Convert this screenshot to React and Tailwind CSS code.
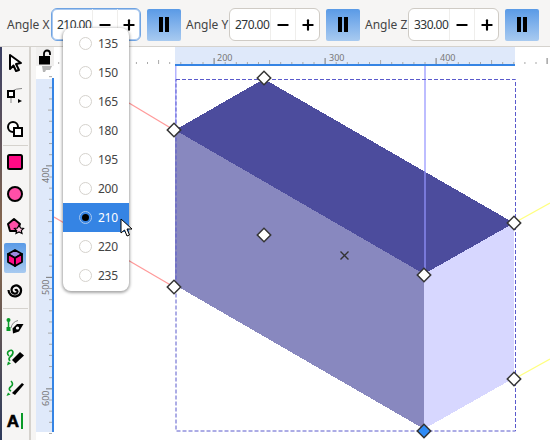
import { Minus, Plus } from "lucide-react";

const OPTIONS = [135, 150, 165, 180, 195, 200, 210, 220, 235];

function AngleField({ label, value, focused }) {
  return (
    <>
      <span className={`text-[12px] text-[#444] whitespace-nowrap ${focused ? "w-[44px]" : "w-[43px]"}`}>{label}</span>
      <div
        className={`flex h-[33px] items-stretch rounded-[6px] bg-white overflow-hidden border ${
          focused ? "w-[90px] border-[#6fa3e2] shadow-[inset_0_0_0_1px_#a9c8ef]" : "w-[91px] border-[#cfcbc5]"
        }`}
      >
        <span className="w-[40px] pl-[5px] text-[12px] leading-[31px] text-[#2e3436] tracking-[-0.55px] whitespace-nowrap">{value}</span>
        <span className="flex w-[25px] items-center justify-center border-l border-[#efeeec]">
          <Minus size={16} strokeWidth={3.2} className="text-black" />
        </span>
        <span className="flex flex-1 items-center justify-center border-l border-[#efeeec]">
          <Plus size={16} strokeWidth={3.2} className="text-black" />
        </span>
      </div>
      <div className="flex h-[32px] w-[34px] ml-[6px] mr-[5px] items-center justify-center gap-[2px] rounded-[2px] bg-gradient-to-b from-[#5a9ae6] to-[#a8caf0]">
        <span className="h-[15px] w-[4px] bg-black" />
        <span className="h-[15px] w-[4px] bg-black" />
      </div>
    </>
  );
}

function Tool({ active, children }) {
  return (
    <div className={`mx-[2px] flex h-[30px] w-[22px] items-center justify-center rounded-[2px] ${active ? "bg-gradient-to-b from-[#5a9ae6] to-[#a8caf0]" : ""}`}>
      <svg width="20" height="20" viewBox="0 0 20 20">{children}</svg>
    </div>
  );
}

function LeftToolbar() {
  return (
    <div className="flex w-[36px] shrink-0 bg-[#f6f5f4]">
      <div className="w-[2px] bg-gradient-to-b from-[#3b3f63] via-[#8d6a4a] to-[#2d3a5c]" />
      <div className="flex w-[27px] flex-col pt-[1px]">
        <Tool>
          <path d="M5 2 L16 10 L11 11 L14 17 L11 18 L8.5 12.5 L5 16 Z" fill="#fff" stroke="#000" strokeWidth="2" strokeLinejoin="round" />
        </Tool>
        <div className="h-[3px]" />
        <Tool>
          <path d="M7 5 Q11 2.5 17 2.5" fill="none" stroke="#888" />
          <rect x="3" y="5" width="6" height="6" fill="#fff" stroke="#000" strokeWidth="2" />
          <path d="M13 13 L17 15 L13 17 Z" fill="#000" />
          <path d="M6 12 V17" stroke="#888" />
        </Tool>
        <div className="h-[3px]" />
        <Tool>
          <circle cx="8" cy="8" r="5" fill="#fff" stroke="#000" strokeWidth="2" />
          <rect x="9" y="9" width="8" height="8" fill="#fff" stroke="#000" strokeWidth="2" />
        </Tool>
        <div className="mx-[1px] mb-[1px] mt-[1px] h-px bg-[#d5d2cd]" />
        <Tool>
          <rect x="3" y="3" width="14" height="14" rx="1.5" fill="#ff0a85" stroke="#000" strokeWidth="2" />
        </Tool>
        <div className="h-[2px]" />
        <Tool>
          <circle cx="10" cy="10" r="7" fill="#ff4fa8" stroke="#000" strokeWidth="2" />
        </Tool>
        <div className="h-[2px]" />
        <Tool>
          <path d="M9 3 L15 8 L12.5 15 L5 15 L3 8 Z" fill="#ff4fa8" stroke="#000" strokeWidth="2" strokeLinejoin="round" />
          <path d="M14 9 L15.5 12 L18.5 12.5 L16.3 14.6 L17 17.5 L14 16 L11 17.5 L11.7 14.6 L9.5 12.5 L12.5 12 Z" fill="#ffc0dd" stroke="#000" strokeWidth="1.2" />
        </Tool>
        <div className="h-[2px]" />
        <Tool active>
          <path d="M10 2 L17 6 L10 10 L3 6 Z" fill="#9d8ae0" stroke="#000" strokeWidth="1.8" strokeLinejoin="round" />
          <path d="M3 6 L10 10 L10 18 L3 14 Z" fill="#ff0a85" stroke="#000" strokeWidth="1.8" strokeLinejoin="round" />
          <path d="M17 6 L10 10 L10 18 L17 14 Z" fill="#ff0a85" stroke="#000" strokeWidth="1.8" strokeLinejoin="round" />
        </Tool>
        <div className="h-[2px]" />
        <Tool>
          <path d="M10 10.5 C11.5 9 13.5 11 12 12.7 C10 14.8 6.5 13 6.5 10 C6.5 6 11 4.3 14 6.5 C17.5 9 16.5 15.5 11 16.3 C7 17 3.5 14 3.5 10" fill="none" stroke="#000" strokeWidth="2.2" />
        </Tool>
        <div className="mx-[1px] mb-[2px] mt-[3px] h-px bg-[#d5d2cd]" />
        <Tool>
          <path d="M3.5 4 V12" stroke="#0a9a28" strokeWidth="1.5" />
          <circle cx="3.5" cy="4" r="2" fill="#0a9a28" />
          <rect x="1.5" y="11" width="4" height="4" fill="#0a9a28" />
          <path d="M6 12 Q7 6 13 4.5" fill="none" stroke="#888" />
          <path d="M18.5 8 L14 15.5 L8 17.5 L7.5 12.5 L12 8 Z" fill="#000" />
          <circle cx="12.5" cy="12" r="1.6" fill="#fff" />
        </Tool>
        <div className="h-[1px]" />
        <Tool>
          <path d="M4 9 Q1 6 4 4 Q7 2 8 5 Q8 8 5 10 Q3 12 5 14" fill="none" stroke="#0a9a28" strokeWidth="1.6" />
          <path d="M2 18.5 L3 14.5 L6 16.5 Z" fill="#0a9a28" />
          <path d="M7 13 L15 5 L19 8.5 L10.5 16.5 Z" fill="#000" />
        </Tool>
        <div className="h-[1px]" />
        <Tool>
          <path d="M6 3 Q9 6 6 8.5 Q2.5 11 6 13" fill="none" stroke="#0a9a28" strokeWidth="1.6" />
          <path d="M1.5 18 L3 14.5 L5.5 16.5 Z" fill="#0a9a28" />
          <path d="M7 15 L17 5 L19 6.5 L10 17 Z" fill="#000" />
        </Tool>
        <div className="h-[3px]" />
        <div className="mx-[2px] flex h-[30px] w-[22px] items-center justify-center gap-[2px]">
          <span className="font-['Liberation_Sans',sans-serif] text-[17px] font-bold leading-none text-black [-webkit-text-stroke:0.6px_#000]">A</span>
          <span className="h-[16px] w-[2px] bg-[#0a9a28]" />
        </div>
      </div>
      <div className="w-[2px] bg-[#d5d2cd]" />
      <div className="flex-1" />
    </div>
  );
}

function TopRuler() {
  const ticks = [];
  for (let i = 0; i < 48; i++) {
    const x = 58.7 + i * 11.1;
    const major = i % 10 === 4;
    const mid = i % 5 === 4;
    ticks.push(<line key={i} x1={x} x2={x} y1={major ? 57 : mid ? 59 : 61} y2={63} stroke={major ? "#777" : "#a8a8a8"} />);
  }
  return (
    <svg width="514" height="19" viewBox="36 46 514 19" className="block shrink-0 bg-white">
      <rect x="175" y="46" width="340" height="19" fill="#dfe9fa" />
      {ticks}
      <rect x="175" y="63" width="340" height="2" fill="#3584e4" />
      {[["200", 214], ["300", 326], ["400", 437]].map(([t, x]) => (
        <text key={t} x={x + 3} y="60" fontSize="9" fill="#777" fontFamily="Noto Sans">{t}</text>
      ))}
    </svg>
  );
}

function LeftRuler() {
  const ticks = [];
  for (let i = 0; i < 34; i++) {
    const y = 65 + i * 11.15 + 0.5;
    const major = i % 10 === 9;
    const mid = i % 5 === 4;
    ticks.push(<line key={i} x1={major ? 46 : mid ? 48 : 49} x2="52" y1={y} y2={y} stroke={major ? "#777" : "#a8a8a8"} />);
  }
  return (
    <svg width="18" height="374" viewBox="36 66 18 374" className="block shrink-0 bg-white">
      <rect x="36" y="79" width="18" height="353" fill="#dfe9fa" />
      {ticks}
      <rect x="52" y="78" width="2" height="354" fill="#3584e4" />
      <path d="M42 66 H52 L50 70 H46 L45 72 H43 Z" fill="#b5b5b5" />
      {[["400", 165], ["500", 277], ["600", 388]].map(([t, y]) => (
        <text key={t} x="49" y={y + 18} transform={`rotate(-90 49 ${y + 18})`} fontSize="9" fill="#777" fontFamily="Noto Sans">{t}</text>
      ))}
    </svg>
  );
}

function Handle({ x, y, fill = "#fff" }) {
  return <rect x={x - 4.75} y={y - 4.75} width="9.5" height="9.5" transform={`rotate(45 ${x} ${y})`} fill={fill} stroke="#333" strokeWidth="1.5" />;
}

function Scene() {
  return (
    <svg width="496" height="374" viewBox="54 66 496 374" className="block shrink-0 bg-white">
      <line x1="129" y1="103" x2="174" y2="130" stroke="#ff9a9a" strokeWidth="1.2" />
      <line x1="54" y1="217" x2="174" y2="287" stroke="#ff9a9a" strokeWidth="1.2" />
      <line x1="514" y1="223" x2="550" y2="203" stroke="#ffff80" strokeWidth="1.3" />
      <line x1="514" y1="379" x2="550" y2="359" stroke="#ffff80" strokeWidth="1.3" />
      <polygon points="175,130 264,79 514,223 424,274" fill="#4c4c9d" shapeRendering="crispEdges" />
      <polygon points="175,130 424,274 424,429 175,285" fill="#8888bf" shapeRendering="crispEdges" />
      <polygon points="424,274 514,223 514,378 424,429" fill="#d7d7ff" shapeRendering="crispEdges" />
      <rect x="175" y="66" width="1.5" height="64" fill="#b4b4ff" />
      <rect x="424" y="66" width="2" height="208" fill="#9494ff" fillOpacity="0.62" />
      <rect x="176" y="79.5" width="339.5" height="351.5" fill="none" stroke="#5a5acc" strokeDasharray="4 2" />
      <Handle x={264} y={78} />
      <Handle x={174} y={130} />
      <Handle x={514} y={223} />
      <Handle x={424} y={275} />
      <Handle x={264} y={235} />
      <Handle x={174} y={287} />
      <Handle x={514} y={379} />
      <Handle x={424} y={431} fill="#2f8bf5" />
      <path d="M340.5 251.5 L348.5 259.5 M348.5 251.5 L340.5 259.5" stroke="#333" strokeWidth="1.4" />
    </svg>
  );
}

function Popup() {
  return (
    <div className="absolute left-[63px] top-[28px] flex w-[66px] flex-col rounded-[8px] bg-white pb-[1px] pt-[1px] shadow-[0_1px_3px_1px_rgba(0,0,0,0.35)]">
      {OPTIONS.map((n) => {
        const on = n === 210;
        return (
          <div key={n} className={`flex h-[29px] items-center pl-[16px] ${on ? "bg-[#3584e4] text-white" : "text-[#444]"}`}>
            <span className={`flex h-[13px] w-[13px] items-center justify-center rounded-full border ${on ? "border-[#a9c8ef] bg-[#3584e4]" : "border-[#d5d2cd] bg-white"}`}>
              {on && <span className="h-[7px] w-[7px] rounded-full bg-black" />}
            </span>
            <span className="ml-[6px] text-[12px] tracking-[-0.3px]">{n}</span>
          </div>
        );
      })}
    </div>
  );
}

export default function App() {
  return (
    <div className="relative flex h-[440px] w-[550px] flex-col overflow-hidden bg-[#f6f5f4] font-['Noto_Sans',sans-serif]">
      <div className="flex h-[47px] shrink-0 items-center border-b border-[#d5d2cd] pl-[7px] pt-[3px]">
        <AngleField label="Angle X" value="210.00" focused />
        <AngleField label="Angle Y" value="270.00" />
        <AngleField label="Angle Z" value="330.00" />
      </div>
      <div className="flex min-h-0 flex-1">
        <LeftToolbar />
        <div className="flex flex-col">
          <div className="relative">
            <TopRuler />
            <div className="absolute left-0 top-0 flex h-[19px] w-[18px] items-center justify-center bg-[#f0efee]">
              <svg width="14" height="16" viewBox="0 0 14 16">
                <path d="M6 7 V4.5 A3 3 0 0 1 12 4.5 V6" fill="none" stroke="#000" strokeWidth="1.8" />
                <rect x="1" y="7" width="11" height="8.5" fill="#000" />
              </svg>
            </div>
          </div>
          <div className="flex">
            <LeftRuler />
            <Scene />
          </div>
        </div>
      </div>
      <Popup />
      <svg width="16" height="22" viewBox="0 0 16 22" className="absolute left-[120px] top-[218px]">
        <path d="M1 1 L1 15 L4.5 12 L7 18 L9.5 17 L7 11 L12 11 Z" fill="#fff" stroke="#000" strokeWidth="1" strokeLinejoin="round" />
      </svg>
    </div>
  );
}
